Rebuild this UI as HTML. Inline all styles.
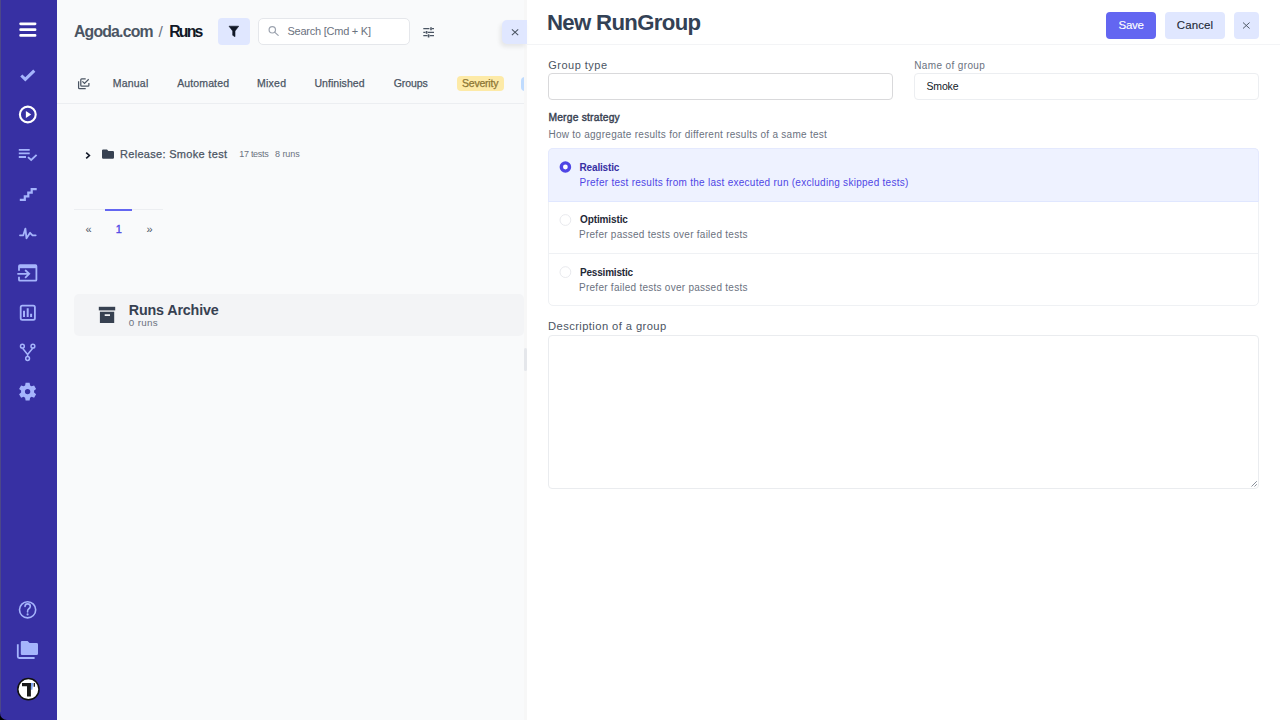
<!DOCTYPE html>
<html><head><meta charset="utf-8">
<style>
*{box-sizing:border-box;margin:0;padding:0}
html,body{width:1280px;height:720px;overflow:hidden;background:#000;font-family:"Liberation Sans",sans-serif;color:#111827}
.abs{position:absolute}
.t{position:absolute;white-space:nowrap;line-height:1}
svg{position:absolute;overflow:visible}
</style></head><body>
<!-- main bg -->
<div class="abs" style="left:50px;top:0;width:480px;height:720px;background:#f9fafb"></div>
<!-- sidebar -->
<div class="abs" style="left:0;top:0;width:57px;height:720px;background:#3730a3;border-bottom-left-radius:7px"></div>
<div class="abs" style="left:0;top:0;width:1px;height:712px;background:#4c4788"></div>

<svg style="left:0;top:0" width="57" height="720" viewBox="0 0 57 720">
 <g stroke="#fff" stroke-width="2.7" stroke-linecap="round" fill="none">
  <path d="M20.6 23.8H35.1M20.6 29.7H35.1M20.6 35.4H35.1"/>
 </g>
 <g stroke="#a5b4fc" fill="none">
  <path d="M21.3 75.5L25.3 79.3L34.3 70.6" stroke-width="3.1"/>
 </g>
 <circle cx="27.8" cy="114.5" r="7.9" stroke="#fff" stroke-width="2.1" fill="none"/>
 <path d="M25.9 111.1L31.2 114.5L25.9 118.1Z" fill="#fff"/>
 <g stroke="#a5b4fc" stroke-width="1.8" fill="none">
  <path d="M18.8 149.8H29.7M18.8 153.3H29.7M18.8 157H26"/>
  <path d="M28 157.1L31.2 160L36.6 154.8"/>
  <path d="M19.8 199.8H24.8V196.3H28.3V192.7H31.7V189.1H36.7" stroke-width="2.2"/>
  <path d="M20 235.3H23.3L25.4 228.6L26.5 238.3L30.1 232.8L32.5 235.3H35.7" stroke-linejoin="round" stroke-linecap="round"/>
 </g>
 <!-- login box -->
 <g stroke="#a5b4fc" stroke-width="1.8" fill="none">
  <path d="M19 270.7V266.2Q19 265.2 20 265.2H35.5Q36.4 265.2 36.4 266.2V279.7Q36.4 280.7 35.5 280.7H20Q19 280.7 19 279.7V276.8"/>
  <path d="M18 273.8H29.2M25.6 270.5L29.2 273.8L25.6 277.3" stroke-linecap="round"/>
 </g>
 <rect x="19" y="265" width="17.4" height="3.2" fill="#a5b4fc"/>
 <!-- chart box -->
 <g stroke="#a5b4fc" fill="none">
  <rect x="20.7" y="305.7" width="14.2" height="14.2" rx="1.6" stroke-width="1.8"/>
  <path d="M24 310.8V317M27.7 308.3V317M31.1 313.7V317" stroke-width="2"/>
 </g>
 <!-- git -->
 <g stroke="#a5b4fc" stroke-width="1.5" fill="none">
  <circle cx="22.4" cy="346.2" r="1.9"/>
  <circle cx="32.9" cy="346.2" r="1.9"/>
  <circle cx="27.6" cy="358.5" r="1.9"/>
  <path d="M22.6 348.2L27.6 354.5L32.7 348.2M27.6 354.5V356.6"/>
 </g>
 <!-- gear -->
 <g fill="#a5b4fc">
  <path id="gear" fill-rule="evenodd" d="M25.6 382.8H29.6L30.1 385.4L31.6 386.3L34.1 385.4L36.1 388.9L34.1 390.6V392.4L36.1 394.2L34.1 397.7L31.6 396.8L30.1 397.7L29.6 400.5H25.6L25.1 397.7L23.6 396.8L21.1 397.7L19.1 394.2L21.1 392.4V390.6L19.1 388.9L21.1 385.4L23.6 386.3L25.1 385.4Z M27.6 388.9A2.7 2.7 0 1 0 27.6 394.3A2.7 2.7 0 1 0 27.6 388.9Z"/>
 </g>
 <!-- question -->
 <g stroke="#a5b4fc" stroke-width="1.6" fill="none">
  <circle cx="27.6" cy="609.8" r="8.1"/>
  <path d="M25 606.5Q25 603.9 27.6 603.9Q30.3 603.9 30.3 606.3Q30.3 608 28.6 609Q27.6 609.6 27.6 611.2V612" stroke-linecap="round"/>
 </g>
 <circle cx="27.6" cy="614.4" r="1.05" fill="#a5b4fc"/>
 <!-- folders -->
 <path d="M20.8 642.2Q20.8 640.9 22.1 640.9H27.6L29.6 643.1H36.6Q38 643.1 38 644.4V653.7Q38 655 36.6 655H22.1Q20.8 655 20.8 653.7Z" fill="#a5b4fc"/>
 <path d="M17.8 644.3V656.6Q17.8 658 19.2 658H34.6" stroke="#a5b4fc" stroke-width="1.8" fill="none"/>
 <!-- avatar -->
 <circle cx="28.4" cy="689.2" r="10.6" fill="#fff" stroke="#111" stroke-width="1.5"/>
 <path d="M22 683H31.1V686.3H30.9V696.6H27V686.3H22Z" fill="#1a1a1a"/>
 <path d="M31.1 683H33L32.3 689.8H31.1Z" fill="#6d9cf7"/>
 <path d="M33.6 683H35V686.7H33.6Z" fill="#1a1a1a"/>
</svg>

<!-- top bar controls -->
<div class="abs" style="left:218px;top:18px;width:32px;height:27px;background:#e0e7ff;border-radius:4px"></div>
<svg style="left:0;top:0" width="1" height="1" viewBox="0 0 1 1">
 <path d="M229 26.2H238.7L235 31V36.7L232.7 35.3V31Z" fill="#111827" stroke="#111827" stroke-width="0.6" stroke-linejoin="round"/>
</svg>
<div class="abs" style="left:258px;top:18px;width:152px;height:27px;background:#fff;border:1px solid #e5e7eb;border-radius:5px"></div>
<svg style="left:0;top:0" width="1" height="1" viewBox="0 0 1 1">
 <g stroke="#9ca3af" stroke-width="1.2" fill="none" stroke-linecap="round">
  <circle cx="272.3" cy="29.8" r="3.2"/>
  <path d="M274.6 32.1L278.2 35.4"/>
 </g>
 <g stroke="#4b5563" stroke-width="1.3" fill="none">
  <path d="M423.3 28.7H429.4M431.9 28.7H434M423.3 32.4H425.5M427.7 32.4H434M423.3 35.7H427.6M429.6 35.7H434"/>
  <path d="M431 27.3V30.2M426.6 31.1V33.7M428.6 34.3V37.4" stroke-width="1.6"/>
 </g>
</svg>

<!-- tabs -->
<svg style="left:0;top:0" width="1" height="1" viewBox="0 0 1 1">
 <g stroke="#4b5563" stroke-width="1.25" fill="none">
  <path d="M85.7 78.8H81.7Q80.8 78.8 80.8 79.7V85.3Q80.8 86.2 81.7 86.2H88Q88.9 86.2 88.9 85.3V83"/>
  <path d="M82.4 81.4L84.5 83.4L88.7 79.3"/>
  <path d="M78.6 81.2V87.8Q78.6 88.7 79.5 88.7H85.7"/>
 </g>
</svg>
<div class="abs" style="left:456.5px;top:76.3px;width:47.5px;height:14.6px;background:#fdeaa7;border-radius:4px"></div>
<div class="abs" style="left:521px;top:77px;width:8px;height:13.5px;background:#bfdbfe;border-radius:4px"></div>
<div class="abs" style="left:57px;top:103px;width:467px;height:1px;background:#eceef1"></div>
<div class="abs" style="left:524px;top:0;width:4px;height:720px;background:linear-gradient(90deg,#f7f7f7 0,#f7f7f7 70%,#fcfcfc 100%)"></div>

<!-- release row -->
<svg style="left:0;top:0" width="1" height="1" viewBox="0 0 1 1">
 <path d="M86.2 152.6L89.4 155.5L86.2 158.4" stroke="#111827" stroke-width="1.6" fill="none"/>
 <path d="M102 150.6Q102 149.4 103.2 149.4H107L108.4 150.9H112.8Q114 150.9 114 152.1V157.6Q114 158.8 112.8 158.8H103.2Q102 158.8 102 157.6Z" fill="#374151"/>
</svg>

<!-- pagination -->
<div class="abs" style="left:74px;top:209px;width:89px;height:1px;background:#eceef1"></div>
<div class="abs" style="left:104.8px;top:209px;width:27.2px;height:2px;background:#6366f1"></div>

<!-- archive card -->
<div class="abs" style="left:73.7px;top:294px;width:450px;height:42px;background:#f3f4f6;border-radius:5px"></div>
<svg style="left:0;top:0" width="1" height="1" viewBox="0 0 1 1">
 <rect x="98.8" y="306.8" width="16.4" height="3.6" fill="#374151"/>
 <path d="M99.9 311.7H114.2V323H99.9Z M104.7 314.2V316H110V314.2Z" fill="#374151" fill-rule="evenodd"/>
</svg>
<div class="abs" style="left:524.2px;top:348px;width:3.3px;height:23px;background:#e5e7eb;border-radius:2px"></div>

<!-- panel -->
<div class="abs" style="left:527px;top:0;width:753px;height:720px;background:#fff"></div>
<div class="abs" style="left:502px;top:20px;width:25px;height:24px;background:#e0e7ff;border-radius:5px 0 0 5px;box-shadow:-2px 3px 4px rgba(0,0,0,0.08)"></div>
<svg style="left:0;top:0" width="1" height="1" viewBox="0 0 1 1">
 <path d="M511.9 29.3L518.2 35.2M518.2 29.3L511.9 35.2" stroke="#4b5563" stroke-width="1.05" fill="none"/>
</svg>
<div class="abs" style="left:527px;top:44px;width:753px;height:1px;background:#f3f4f6"></div>

<div class="abs" style="left:1106.4px;top:12px;width:49.4px;height:27px;background:#6366f1;border-radius:4px"></div>
<div class="abs" style="left:1164.8px;top:12px;width:60px;height:27px;background:#e0e7ff;border-radius:4px"></div>
<div class="abs" style="left:1233.5px;top:12px;width:25.6px;height:27px;background:#e0e7ff;border-radius:4px"></div>
<svg style="left:0;top:0" width="1" height="1" viewBox="0 0 1 1">
 <path d="M1243 22.5L1249.6 28.5M1249.6 22.5L1243 28.5" stroke="#4b5563" stroke-width="0.95" fill="none"/>
</svg>

<!-- inputs -->
<div class="abs" style="left:548.2px;top:73.2px;width:344.4px;height:26.5px;background:#fff;border:1px solid #d9d9db;border-radius:4px"></div>
<div class="abs" style="left:914px;top:73.2px;width:345px;height:26.5px;background:#fff;border:1px solid #eceef1;border-radius:4px"></div>

<!-- radio group -->
<div class="abs" style="left:548px;top:148px;width:711px;height:158.3px;background:#fff;border:1px solid #eff1f4;border-radius:5px"></div>
<div class="abs" style="left:548px;top:148px;width:711px;height:53.5px;background:#eef2ff;border:1px solid #e4e9fe;border-bottom-color:#e0e7ff;border-radius:5px 5px 0 0"></div>
<div class="abs" style="left:549px;top:253.2px;width:709px;height:1px;background:#eff1f4"></div>
<svg style="left:0;top:0" width="1" height="1" viewBox="0 0 1 1">
 <circle cx="565.4" cy="167" r="4.1" fill="#fff" stroke="#4f46e5" stroke-width="3.4"/>
 <circle cx="565.4" cy="220" r="5.4" fill="#fff" stroke="#e5e7eb" stroke-width="0.9"/>
 <circle cx="565.4" cy="272.1" r="5.4" fill="#fff" stroke="#e5e7eb" stroke-width="0.9"/>
</svg>

<!-- textarea -->
<div class="abs" style="left:548px;top:334.7px;width:711px;height:154px;background:#fff;border:1px solid #eaecef;border-radius:4px"></div>
<svg style="left:0;top:0" width="1" height="1" viewBox="0 0 1 1">
 <path d="M1251.5 486.5L1256.8 481.2M1254.5 486.5L1256.8 484.2" stroke="#6b7280" stroke-width="0.8" fill="none"/>
</svg>

<div class="t" id="agoda" style="left:74.00px;top:24.13px;font-size:15.8px;font-weight:bold;color:#4b5563;letter-spacing:-0.812px;">Agoda.com</div>
<div class="t" id="slash" style="left:158.50px;top:23.68px;font-size:15.5px;font-weight:normal;color:#6b7280;letter-spacing:0.000px;">/</div>
<div class="t" id="runs" style="left:169.20px;top:24.13px;font-size:15.8px;font-weight:bold;color:#111827;letter-spacing:-1.800px;">Runs</div>
<div class="t" id="search" style="left:287.40px;top:26.49px;font-size:11px;font-weight:normal;color:#6b7280;letter-spacing:-0.233px;">Search [Cmd + K]</div>
<div class="t" id="tab1" style="left:112.80px;top:78.31px;font-size:10.5px;font-weight:normal;color:#4b5563;letter-spacing:0.200px;-webkit-text-stroke:0.25px currentColor;">Manual</div>
<div class="t" id="tab2" style="left:177.20px;top:78.31px;font-size:10.5px;font-weight:normal;color:#4b5563;letter-spacing:0.125px;-webkit-text-stroke:0.25px currentColor;">Automated</div>
<div class="t" id="tab3" style="left:257.00px;top:78.31px;font-size:10.5px;font-weight:normal;color:#4b5563;letter-spacing:0.250px;-webkit-text-stroke:0.25px currentColor;">Mixed</div>
<div class="t" id="tab4" style="left:314.40px;top:78.31px;font-size:10.5px;font-weight:normal;color:#4b5563;letter-spacing:0.056px;-webkit-text-stroke:0.25px currentColor;">Unfinished</div>
<div class="t" id="tab5" style="left:393.80px;top:78.31px;font-size:10.5px;font-weight:normal;color:#4b5563;letter-spacing:-0.100px;-webkit-text-stroke:0.25px currentColor;">Groups</div>
<div class="t" id="tab6" style="left:462.00px;top:78.31px;font-size:10.5px;font-weight:normal;color:#8c7634;letter-spacing:-0.214px;-webkit-text-stroke:0.25px currentColor;">Severity</div>
<div class="t" id="rel" style="left:120.00px;top:149.09px;font-size:11px;font-weight:normal;color:#4b5563;letter-spacing:0.306px;-webkit-text-stroke:0.25px currentColor;">Release: Smoke test</div>
<div class="t" id="tests" style="left:239.25px;top:150.18px;font-size:9px;font-weight:normal;color:#6b7280;letter-spacing:-0.286px;">17 tests</div>
<div class="t" id="runs8" style="left:275.00px;top:150.18px;font-size:9px;font-weight:normal;color:#6b7280;letter-spacing:-0.060px;">8 runs</div>
<div class="t" id="pgp" style="left:85.60px;top:223.99px;font-size:11px;font-weight:normal;color:#4b5563;letter-spacing:0.000px;">«</div>
<div class="t" id="pg1" style="left:115.80px;top:223.69px;font-size:11px;font-weight:normal;color:#4f46e5;letter-spacing:0.000px;-webkit-text-stroke:0.35px currentColor;">1</div>
<div class="t" id="pgn" style="left:146.40px;top:223.99px;font-size:11px;font-weight:normal;color:#4b5563;letter-spacing:0.000px;">»</div>
<div class="t" id="arch" style="left:128.80px;top:302.90px;font-size:14.3px;font-weight:bold;color:#374151;letter-spacing:-0.155px;">Runs Archive</div>
<div class="t" id="arch0" style="left:128.80px;top:317.90px;font-size:9.8px;font-weight:normal;color:#6b7280;letter-spacing:0.340px;">0 runs</div>
<div class="t" id="title" style="left:547.00px;top:11.91px;font-size:22.2px;font-weight:bold;color:#334155;letter-spacing:-0.673px;">New RunGroup</div>
<div class="t" id="save" style="left:1118.60px;top:19.87px;font-size:11.5px;font-weight:normal;color:#ffffff;letter-spacing:-0.333px;-webkit-text-stroke:0.12px currentColor;">Save</div>
<div class="t" id="cancel" style="left:1176.80px;top:19.87px;font-size:11.5px;font-weight:normal;color:#1f2937;letter-spacing:0.100px;-webkit-text-stroke:0.12px currentColor;">Cancel</div>
<div class="t" id="gtype" style="left:548.20px;top:60.29px;font-size:11px;font-weight:normal;color:#4b5563;letter-spacing:0.500px;">Group type</div>
<div class="t" id="gname" style="left:914.20px;top:61.03px;font-size:10px;font-weight:normal;color:#6b7280;letter-spacing:0.375px;">Name of group</div>
<div class="t" id="smoke" style="left:926.40px;top:80.71px;font-size:10.5px;font-weight:normal;color:#111827;letter-spacing:-0.125px;">Smoke</div>
<div class="t" id="merge" style="left:548.40px;top:113.18px;font-size:10.3px;font-weight:normal;color:#374151;letter-spacing:0.208px;-webkit-text-stroke:0.4px currentColor;">Merge strategy</div>
<div class="t" id="howto" style="left:548.40px;top:129.93px;font-size:10px;font-weight:normal;color:#6b7280;letter-spacing:0.272px;">How to aggregate results for different results of a same test</div>
<div class="t" id="real" style="left:579.50px;top:162.73px;font-size:10px;font-weight:bold;color:#3730a3;letter-spacing:-0.156px;">Realistic</div>
<div class="t" id="realsub" style="left:579.50px;top:177.53px;font-size:10px;font-weight:normal;color:#4f46e5;letter-spacing:0.271px;">Prefer test results from the last executed run (excluding skipped tests)</div>
<div class="t" id="opt" style="left:580.00px;top:214.53px;font-size:10px;font-weight:bold;color:#1f2937;letter-spacing:-0.111px;">Optimistic</div>
<div class="t" id="optsub" style="left:579.00px;top:229.53px;font-size:10px;font-weight:normal;color:#6b7280;letter-spacing:0.264px;">Prefer passed tests over failed tests</div>
<div class="t" id="pes" style="left:580.00px;top:268.14px;font-size:10px;font-weight:bold;color:#1f2937;letter-spacing:-0.200px;">Pessimistic</div>
<div class="t" id="pessub" style="left:579.00px;top:282.54px;font-size:10px;font-weight:normal;color:#6b7280;letter-spacing:0.264px;">Prefer failed tests over passed tests</div>
<div class="t" id="desc" style="left:548.00px;top:321.32px;font-size:11.2px;font-weight:normal;color:#4b5563;letter-spacing:0.417px;">Description of a group</div>
</body></html>
